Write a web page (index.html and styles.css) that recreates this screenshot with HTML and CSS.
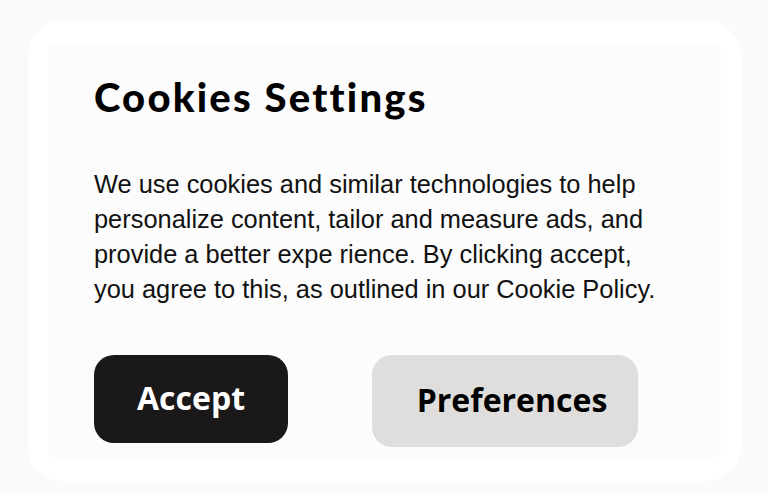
FILE: index.html
```html
<!DOCTYPE html>
<html lang="en">
<head>
<meta charset="utf-8">
<title>Cookies Settings</title>
<link rel="stylesheet" href="styles.css">
</head>
<body>
<div class="outer">
  <div class="panel">
    <h1 class="title">Cookies Settings</h1>
    <p class="text">We use cookies and similar technologies to help personalize content, tailor and measure ads, and provide a better expe rience. By clicking accept, you agree to this, as outlined in our Cookie Policy.</p>
    <div class="actions">
      <button class="btn btn-accept">Accept</button>
      <button class="btn btn-prefs">Preferences</button>
    </div>
  </div>
</div>
</body>
</html>
```
FILE: styles.css
```css
html, body {
  margin: 0;
  padding: 0;
}
body {
  background: #fafafa;
  width: 768px;
  height: 492px;
  overflow: hidden;
}
.outer {
  margin: 21px 27px 0 28px;
  height: 460px;
  box-sizing: border-box;
  background: #ffffff;
  border-radius: 34px;
  padding: 21px 20px 0 20px;
}
.panel {
  height: 418px;
  box-sizing: border-box;
  background: #fcfcfc;
  border-radius: 12px;
  padding: 35px 0 0 46px;
}
.title {
  margin: 0;
  font-family: "Lato", sans-serif;
  font-weight: 900;
  font-size: 40px;
  line-height: 40px;
  letter-spacing: 2.2px;
  color: #000;
}
.text {
  margin: 50px 0 0 0;
  width: 570px;
  font-family: "Liberation Sans", Arial, sans-serif;
  font-size: 25.4px;
  line-height: 35px;
  color: #111;
}
.actions {
  margin-top: 48px;
  display: flex;
  align-items: flex-start;
  gap: 84px;
}
.btn {
  border: none;
  margin: 0;
  padding: 0 0 3px 0;
  font-family: "Open Sans", sans-serif;
  font-weight: 700;
  font-size: 32px;
  display: flex;
  align-items: center;
  justify-content: center;
}
.btn-accept {
  width: 194px;
  height: 88px;
  background: #1a1818;
  color: #ffffff;
  border-radius: 20px;
}
.btn-prefs {
  width: 266px;
  height: 92px;
  background: #dfdedd;
  color: #000000;
  border-radius: 20px;
  padding-left: 14px;
}
```
